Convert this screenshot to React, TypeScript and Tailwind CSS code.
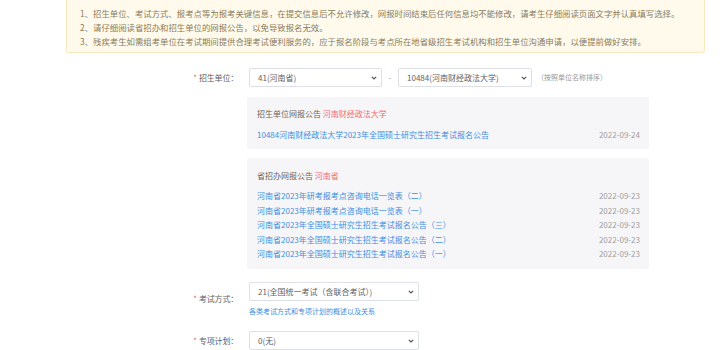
import React from "react";

const font = { fontFamily: '"Noto Sans CJK SC", "Noto Sans", sans-serif' };

function Chevron() {
  return (
    <svg width="6" height="4" viewBox="0 0 6 4" className="shrink-0">
      <path d="M0.8 0.8 L3 3 L5.2 0.8" fill="none" stroke="#555" strokeWidth="1.2" />
    </svg>
  );
}

function Select({ value, w }: { value: string; w: string }) {
  return (
    <div className={`${w} h-[19px] border border-[#dcdfe6] rounded-[2px] bg-white flex items-center justify-between pl-[8px] pr-[4px] text-[8px] text-[#606266]`}>
      <span>{value}</span>
      <Chevron />
    </div>
  );
}

function Label({ text }: { text: string }) {
  return (
    <div className="w-[239px] flex justify-end items-center text-[8px] text-[#606266] pr-[1px]">
      <span className="text-[#f56c6c] mr-[2px] text-[8px]">*</span>
      <span className="tracking-[-0.2px]">{text}：</span>
    </div>
  );
}

function Row({ title, date }: { title: string; date: string }) {
  return (
    <div className="flex justify-between items-center leading-[14.4px] text-[8px]">
      <span className="text-[#3d8ee0]">{title}</span>
      <span className="text-[#a0a0a0]">{date}</span>
    </div>
  );
}

export default function App() {
  const rows2 = [
    "河南省2023年研考报考点咨询电话一览表（二）",
    "河南省2023年研考报考点咨询电话一览表（一）",
    "河南省2023年全国硕士研究生招生考试报名公告（三）",
    "河南省2023年全国硕士研究生招生考试报名公告（二）",
    "河南省2023年全国硕士研究生招生考试报名公告（一）",
  ];
  return (
    <div className="w-[720px] h-[350px] overflow-hidden bg-white" style={font}>
      <div className="ml-[66px] w-[639px] h-[53px] bg-[#fffaeb] border border-t-0 border-[#f7e8bd] rounded-b-[3px] pl-[13px] pt-[6px] text-[8.4px] leading-[14px] text-[#8a7a5c]">
        <div>1、招生单位、考试方式、报考点等为报考关键信息，在提交信息后不允许修改，网报时间结束后任何信息均不能修改，请考生仔细阅读页面文字并认真填写选择。</div>
        <div>2、请仔细阅读省招办和招生单位的网报公告，以免导致报名无效。</div>
        <div>3、残疾考生如需组考单位在考试期间提供合理考试便利服务的，应于报名阶段与考点所在地省级招生考试机构和招生单位沟通申请，以便提前做好安排。</div>
      </div>

      <div className="flex gap-[8px] mt-[15px]">
        <Label text="招生单位" />
        <div className="flex items-center ml-[2px]">
          <Select value="41(河南省)" w="w-[133px]" />
          <span className="text-[8px] text-[#999] w-[16px] text-center">-</span>
          <Select value="10484(河南财经政法大学)" w="w-[134px]" />
          <span className="text-[7px] text-[#999] ml-[5px]">（按照单位名称排序）</span>
        </div>
      </div>

      <div className="flex gap-[8px] mt-[10px]">
        <div className="w-[239px]" />
        <div className="w-[402px] flex flex-col gap-[9px]">
          <div className="bg-[#f6f6f8] rounded-[2px] pl-[10px] pr-[9px] pt-[10px] pb-[7px]">
            <div className="text-[8px] leading-[14px] text-[#666] mb-[7px]">
              招生单位网报公告 <span className="text-[#f56c6c]">河南财经政法大学</span>
            </div>
            <Row title="10484河南财经政法大学2023年全国硕士研究生招生考试报名公告" date="2022-09-24" />
          </div>
          <div className="bg-[#f6f6f8] rounded-[2px] pl-[10px] pr-[9px] pt-[11px] pb-[8px]">
            <div className="text-[8px] leading-[14px] text-[#666] mb-[6px]">
              省招办网报公告 <span className="text-[#f56c6c]">河南省</span>
            </div>
            {rows2.map((t) => (
              <Row key={t} title={t} date="2022-09-23" />
            ))}
          </div>
        </div>
      </div>

      <div className="flex gap-[8px] mt-[13px]">
        <Label text="考试方式" />
        <div className="ml-[2px] flex flex-col">
          <Select value="21(全国统一考试（含联合考试）)" w="w-[170px]" />
          <span className="text-[7px] leading-[10px] text-[#3d8ee0] mt-[5px]">各类考试方式和专项计划的概述以及关系</span>
        </div>
      </div>

      <div className="flex gap-[8px] mt-[15px]">
        <Label text="专项计划" />
        <div className="ml-[2px]">
          <Select value="0(无)" w="w-[170px]" />
        </div>
      </div>
    </div>
  );
}
